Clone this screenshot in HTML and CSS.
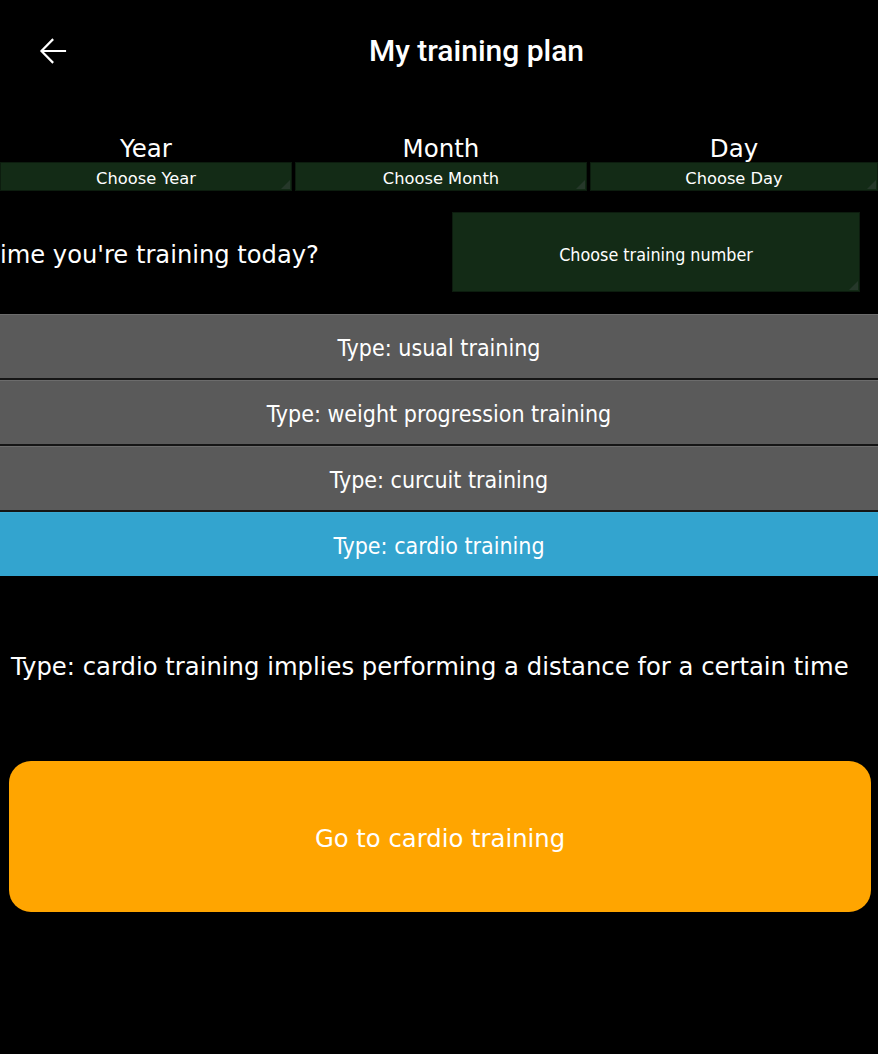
FILE: index.html
```html
<!DOCTYPE html>
<html lang="en">
<head>
<meta charset="utf-8">
<title>My training plan</title>
<link rel="stylesheet" href="styles.css">
</head>
<body>
<header class="toolbar">
  <button class="back" aria-label="Back">
    <svg viewBox="0 0 24 24" width="36" height="36"><path d="M20 12H4.6M11.6 4.6 4.3 12l7.3 7.4" fill="none" stroke="#fff" stroke-width="1.45" stroke-linecap="square"/></svg>
  </button>
  <h1 class="title">My training plan</h1>
</header>

<section class="date-grid">
  <div class="date-col">
    <div class="date-label">Year</div>
    <div class="spinner">Choose Year</div>
  </div>
  <div class="date-col">
    <div class="date-label">Month</div>
    <div class="spinner">Choose Month</div>
  </div>
  <div class="date-col">
    <div class="date-label">Day</div>
    <div class="spinner">Choose Day</div>
  </div>
</section>

<section class="question-row">
  <div class="question">ime you're training today?</div>
  <div class="spinner spinner-big">Choose training number</div>
</section>

<section class="type-list">
  <div class="type-item">Type: usual training</div>
  <div class="type-item">Type: weight progression training</div>
  <div class="type-item">Type: curcuit training</div>
  <div class="type-item type-active">Type: cardio training</div>
</section>

<p class="description">Type: cardio training implies performing a distance for a certain time</p>

<button class="go-btn">Go to cardio training</button>
</body>
</html>
```

FILE: styles.css
```css
* { box-sizing: border-box; }
html, body { margin: 0; padding: 0; background: #000; }
body {
  width: 878px;
  min-height: 1054px;
  color: #fff;
  font-family: "DejaVu Sans", sans-serif;
  overflow: hidden;
}

.toolbar {
  height: 102px;
  display: flex;
  align-items: center;
}
.back {
  width: 36px;
  height: 36px;
  margin-left: 35px;
  padding: 0;
  border: 0;
  background: none;
  display: flex;
}
.title {
  flex: 1;
  margin: 0;
  text-align: center;
  font-family: Roboto, "Liberation Sans", sans-serif;
  font-weight: 500;
  font-size: 30px;
  line-height: 36px;
  padding-left: 4px;
}

.date-grid {
  padding-top: 34px;
  display: grid;
  grid-template-columns: 292px 292px 1fr;
  column-gap: 3px;
}
.date-col { display: flex; flex-direction: column; }
.date-label {
  height: 26px;
  line-height: 26px;
  font-size: 24.5px;
  text-align: center;
}
.spinner {
  position: relative;
  height: 29px;
  line-height: 31px;
  background: #132b16;
  border: 1px solid #0c1c0e;
  font-size: 16.3px;
  text-align: center;
}
.spinner::after {
  content: "";
  position: absolute;
  right: 1px;
  bottom: 1px;
  border-style: solid;
  border-width: 0 0 9px 9px;
  border-color: transparent transparent #26382a transparent;
}

.question-row {
  margin-top: 21px;
  height: 80px;
  display: flex;
  align-items: center;
}
.question {
  flex: 1;
  font-size: 24.2px;
  padding-top: 6px;
  white-space: nowrap;
}
.spinner-big {
  width: 408px;
  height: 80px;
  line-height: 84px;
  margin-right: 18px;
  font-size: 17.8px;
  font-family: "DejaVu Sans Condensed", "DejaVu Sans", sans-serif;
}

.type-list {
  margin-top: 22px;
  display: flex;
  flex-direction: column;
  gap: 2px;
  background: #151515;
}
.type-item {
  height: 64px;
  line-height: 67px;
  background: #5a5a5a;
  border-top: 1px solid #6c6c6c;
  text-align: center;
  font-size: 23px;
  font-family: "DejaVu Sans Condensed", "DejaVu Sans", sans-serif;
}
.type-active {
  background: #33a4cf;
  border-top-color: #3aa9d3;
}

.description {
  margin: 75px 0 0;
  padding-left: 11px;
  height: 30px;
  line-height: 32px;
  font-size: 24.3px;
  white-space: nowrap;
}

.go-btn {
  display: block;
  margin: 80px 7px 0 9px;
  width: 862px;
  height: 151px;
  padding-top: 4px;
  border: 0;
  border-radius: 22px;
  background: #ffa500;
  color: #fff;
  font-family: "DejaVu Sans", sans-serif;
  font-size: 24.3px;
}
```
